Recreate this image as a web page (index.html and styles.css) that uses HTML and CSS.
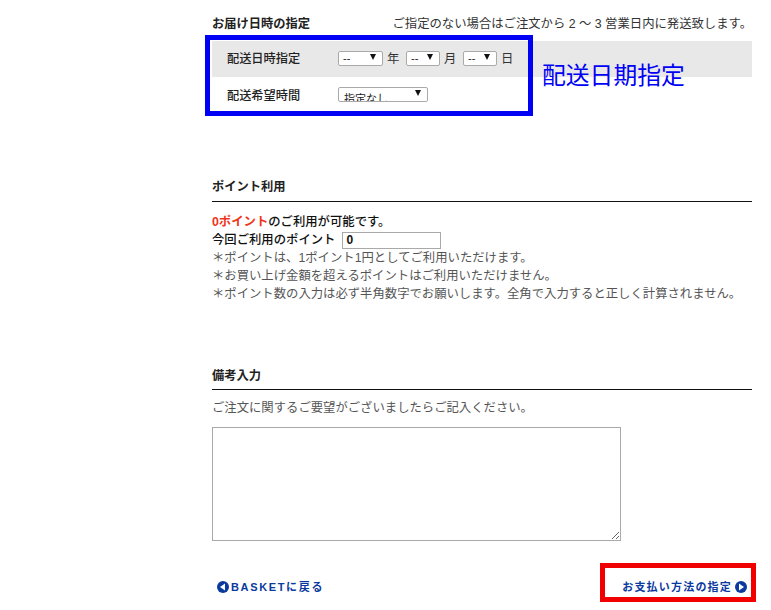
FILE: index.html
```html
<!DOCTYPE html>
<html lang="ja">
<head>
<meta charset="utf-8">
<title>ご注文手続き</title>
<link rel="stylesheet" href="styles.css">
</head>
<body>
<main class="page">
  <section class="delivery">
    <div class="delivery-head">
      <h2 class="title">お届け日時の指定</h2>
      <p class="note">ご指定のない場合はご注文から 2 ～ 3 営業日内に発送致します。</p>
    </div>
    <div class="row row-gray">
      <span class="row-label">配送日時指定</span>
      <span class="pick pick-year"><select class="sel"><option>--</option></select></span><span class="unit">年</span>
      <span class="pick pick-small"><select class="sel"><option>--</option></select></span><span class="unit">月</span>
      <span class="pick pick-small"><select class="sel"><option>--</option></select></span><span class="unit">日</span>
    </div>
    <div class="row row-white">
      <span class="row-label">配送希望時間</span>
      <span class="pick pick-time"><select class="sel sel-clip"><option>指定なし</option></select></span>
    </div>
    <div class="mark-blue"></div>
    <span class="mark-blue-text">配送日期指定</span>
  </section>

  <section class="points">
    <h2 class="title title-rule">ポイント利用</h2>
    <p class="strong"><span class="red">0ポイント</span>のご利用が可能です。</p>
    <p class="strong point-input-line">今回ご利用のポイント<input class="point-input" type="text" value="0"></p>
    <p class="hint">＊ポイントは、1ポイント1円としてご利用いただけます。</p>
    <p class="hint">＊お買い上げ金額を超えるポイントはご利用いただけません。</p>
    <p class="hint">＊ポイント数の入力は必ず半角数字でお願いします。全角で入力すると正しく計算されません。</p>
  </section>

  <section class="remarks">
    <h2 class="title title-rule">備考入力</h2>
    <p class="hint remarks-lead">ご注文に関するご要望がございましたらご記入ください。</p>
    <textarea class="remarks-box"></textarea>
  </section>

  <nav class="actions">
    <a class="action action-back">
      <svg class="arrow" width="12" height="12" viewBox="0 0 12 12"><circle cx="6" cy="6" r="6" fill="#0b3a9e"/><path d="M3 6l5-3.4v6.8z" fill="#fff"/></svg>
      <span>BASKETに戻る</span>
    </a>
    <a class="action action-next">
      <span>お支払い方法の指定</span>
      <svg class="arrow" width="12" height="12" viewBox="0 0 12 12"><circle cx="6" cy="6" r="6" fill="#0b3a9e"/><path d="M9 6L4 2.6v6.8z" fill="#fff"/></svg>
      <span class="mark-red"></span>
    </a>
  </nav>
</main>
</body>
</html>
```
FILE: styles.css
```css
* { box-sizing: border-box; }
html, body { margin: 0; padding: 0; background: #fff; }
body {
  font-family: "Liberation Sans", "Noto Sans CJK JP", sans-serif;
  font-size: 12.35px;
  color: #222;
  overflow: hidden;
}
p, h2 { margin: 0; }
.page {
  position: relative;
  width: 540px;
  height: 610px;
  margin-left: 212px;
}
.title { font-size: 12.25px; font-weight: 700; color: #222; line-height: 18px; }
.delivery { position: relative; padding-top: 15px; height: 172px; }
.delivery-head { display: flex; justify-content: space-between; align-items: center; height: 18px; margin-bottom: 8px; }
.note { color: #333; line-height: 18px; }
.row { display: flex; align-items: center; padding-left: 15px; }
.row-gray { height: 36px; background: #e8e8e8; }
.row-white { height: 37px; }
.row-label { width: 111px; font-weight: 500; font-size: 12.2px; color: #222; }
.row-gray .row-label { margin-top: -3px; }
.row-white .row-label { margin-top: -2px; }
.pick { position: relative; display: block; overflow: hidden; margin-top: -2px; }
.pick::after {
  content: "";
  position: absolute;
  top: 3px;
  right: 7px;
  border-left: 3.5px solid transparent;
  border-right: 3.5px solid transparent;
  border-top: 6px solid #111;
}
.pick-year { width: 45px; height: 15px; }
.pick-small { width: 34px; height: 15px; }
.pick-time { width: 90px; height: 15px; margin-top: -3px; }
.sel {
  appearance: none;
  display: block;
  width: 100%;
  height: 15px;
  padding: 0 0 0 4px;
  border: 1px solid #a9a9a9;
  border-radius: 2px;
  background: #fff;
  font: 11px/13px "Liberation Sans", "Noto Sans CJK JP", sans-serif;
  color: #222;
}
.sel-clip { padding: 3px 0 0 5px; line-height: 16px; }
.unit { width: 23px; padding-left: 4px; color: #333; margin-top: -2px; }
.mark-blue {
  position: absolute;
  left: -7px;
  top: 35px;
  width: 328px;
  height: 81px;
  border: 5px solid #0000f5;
}
.mark-blue-text {
  position: absolute;
  left: 330px;
  top: 61px;
  font-size: 23.8px;
  line-height: 30px;
  color: #0000f5;
}
.points { height: 189px; }
.title-rule { height: 30px; padding-top: 6px; border-bottom: 1px solid #111; }
.points .title-rule { margin-bottom: 11px; }
.strong { font-weight: 500; line-height: 18px; color: #111; font-size: 12.35px; }
.red { color: #f0341a; font-weight: 700; }
.point-input-line { display: flex; align-items: center; }
.point-input {
  width: 99px;
  height: 17px;
  margin-left: 7px;
  padding: 0 3px;
  border: 1px solid #a9a9a9;
  font: 700 12px "Liberation Sans", sans-serif;
  color: #111;
}
.hint { line-height: 18px; color: #555; }
.remarks { height: 190px; }
.remarks .title-rule { padding-top: 6px; height: 29px; }
.remarks-lead { margin-top: 9px; }
.remarks-box {
  display: block;
  width: 409px;
  height: 114px;
  margin-top: 10px;
  border: 1px solid #a9a9a9;
  resize: both;
  outline: none;
}
.actions { display: flex; justify-content: space-between; align-items: center; margin-top: 29px; padding: 0 5px; }
.action {
  display: flex;
  align-items: center;
  gap: 3px;
  font-size: 11px;
  font-weight: 700;
  letter-spacing: 1.2px;
  color: #0b3a9e;
  line-height: 14px;
}
.action-back { gap: 2px; letter-spacing: 1.65px; }
.action-next { position: relative; }
.mark-red {
  position: absolute;
  right: -9px;
  top: -17px;
  width: 156px;
  height: 39px;
  border: 5px solid #f00000;
}
```
